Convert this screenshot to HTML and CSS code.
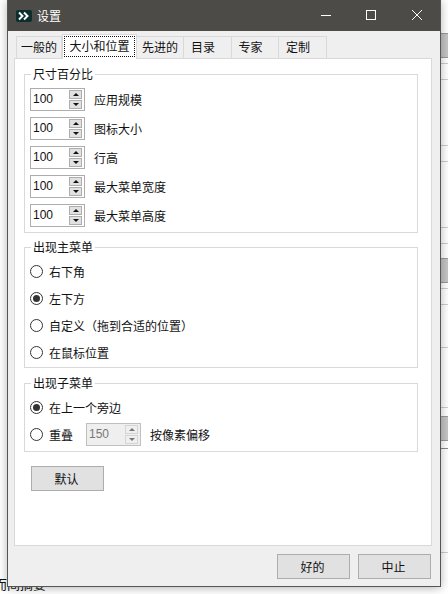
FILE: index.html
```html
<!DOCTYPE html>
<html lang="zh">
<head>
    <meta charset="UTF-8">
    <meta name="viewport" content="width=device-width, initial-scale=1.0">
    <title>设置</title>
    <link rel="stylesheet" href="styles.css">
</head>
<body>
    <div class="desktop">
        <div class="behind-strip"></div>
        <div class="behind-text">而间摘要</div>

        <div class="window">
            <div class="titlebar">
                <div class="app-icon">
                    <svg width="16" height="12" viewBox="0 0 16 12"><path d="M3 2.5 L6.5 6 L3 9.5 M8 2.5 L11.5 6 L8 9.5" fill="none" stroke="#fff" stroke-width="2"/></svg>
                </div>
                <span class="title">设置</span>
                <div class="controls">
                    <svg class="ctl" width="46" height="31" viewBox="0 0 46 31"><path d="M19 15.5 H29" stroke="#fff" fill="none"/></svg>
                    <svg class="ctl" width="46" height="31" viewBox="0 0 46 31"><rect x="18.5" y="10.5" width="9" height="9" stroke="#fff" fill="none"/></svg>
                    <svg class="ctl" width="46" height="31" viewBox="0 0 46 31"><path d="M18 10 L28 20 M28 10 L18 20" stroke="#fff" fill="none"/></svg>
                </div>
            </div>

            <div class="client">
                <div class="tabs">
                    <div class="tab tab-first">一般的</div>
                    <div class="tab tab-active"><span class="focus">大小和位置</span></div>
                    <div class="tab tab-w1">先进的</div>
                    <div class="tab tab-w2">目录</div>
                    <div class="tab tab-w2">专家</div>
                    <div class="tab tab-w2">定制</div>
                </div>

                <div class="panel">
                    <fieldset class="group group-size">
                        <legend>尺寸百分比</legend>
                        <div class="row">
                            <div class="spin"><span class="spin-value">100</span><div class="spin-btns"><div class="spin-btn"><i class="arrow-up"></i></div><div class="spin-btn"><i class="arrow-down"></i></div></div></div>
                            <span class="row-label">应用规模</span>
                        </div>
                        <div class="row">
                            <div class="spin"><span class="spin-value">100</span><div class="spin-btns"><div class="spin-btn"><i class="arrow-up"></i></div><div class="spin-btn"><i class="arrow-down"></i></div></div></div>
                            <span class="row-label">图标大小</span>
                        </div>
                        <div class="row">
                            <div class="spin"><span class="spin-value">100</span><div class="spin-btns"><div class="spin-btn"><i class="arrow-up"></i></div><div class="spin-btn"><i class="arrow-down"></i></div></div></div>
                            <span class="row-label">行高</span>
                        </div>
                        <div class="row">
                            <div class="spin"><span class="spin-value">100</span><div class="spin-btns"><div class="spin-btn"><i class="arrow-up"></i></div><div class="spin-btn"><i class="arrow-down"></i></div></div></div>
                            <span class="row-label">最大菜单宽度</span>
                        </div>
                        <div class="row">
                            <div class="spin"><span class="spin-value">100</span><div class="spin-btns"><div class="spin-btn"><i class="arrow-up"></i></div><div class="spin-btn"><i class="arrow-down"></i></div></div></div>
                            <span class="row-label">最大菜单高度</span>
                        </div>
                    </fieldset>

                    <fieldset class="group group-main">
                        <legend>出现主菜单</legend>
                        <div class="radio-row"><span class="radio"></span>右下角</div>
                        <div class="radio-row"><span class="radio radio-on"></span>左下方</div>
                        <div class="radio-row"><span class="radio"></span>自定义（拖到合适的位置）</div>
                        <div class="radio-row"><span class="radio"></span>在鼠标位置</div>
                    </fieldset>

                    <fieldset class="group group-sub">
                        <legend>出现子菜单</legend>
                        <div class="radio-row"><span class="radio radio-on"></span>在上一个旁边</div>
                        <div class="radio-row">
                            <span class="radio"></span><span class="overlap">重叠</span>
                            <div class="spin spin-off"><span class="spin-value">150</span><div class="spin-btns"><div class="spin-btn"><i class="arrow-up"></i></div><div class="spin-btn"><i class="arrow-down"></i></div></div></div>
                            <span class="row-label">按像素偏移</span>
                        </div>
                    </fieldset>

                    <button class="btn btn-default">默认</button>
                </div>

                <div class="footer">
                    <button class="btn">好的</button>
                    <button class="btn">中止</button>
                </div>
            </div>
        </div>
    </div>
</body>
</html>
```

FILE: styles.css
```css
* {
    box-sizing: border-box;
}

body {
    margin: 0;
    width: 448px;
    height: 594px;
    overflow: hidden;
    background-color: #fff;
    color: #111;
    font-family: "Noto Sans CJK SC", "Liberation Sans", sans-serif;
    font-size: 12px;
}

.desktop {
    position: relative;
    width: 448px;
    height: 594px;
    overflow: hidden;
}

/* table rows of the app behind the dialog, only a sliver shows */
.behind-strip {
    position: absolute;
    right: 0;
    top: 0;
    width: 8px;
    height: 594px;
    background: linear-gradient(to bottom,
        #fff 0 33px, #999 33px 34px, #c4c4c4 34px 57px, #999 57px 58px,
        #fff 58px 63px, #ccc 63px 64px, #fff 64px 79px, #ccc 79px 80px,
        #fff 80px 145px, #ccc 145px 146px, #fff 146px 161px, #ccc 161px 162px,
        #fff 162px 227px, #ccc 227px 228px, #fff 228px 243px, #ccc 243px 244px,
        #fff 244px 258px, #999 258px 259px, #c4c4c4 259px 282px, #999 282px 283px,
        #fff 283px 288px, #ccc 288px 289px, #fff 289px 304px, #ccc 304px 305px,
        #fff 305px 347px, #ccc 347px 348px, #fff 348px 407px, #ccc 407px 408px,
        #fff 408px 416px, #999 416px 417px, #c4c4c4 417px 440px, #999 440px 441px,
        #fff 441px 448px, #888 448px 449px, #fff 449px 552px, #ccc 552px 553px,
        #fff 553px);
}

.behind-text {
    position: absolute;
    left: -6px;
    top: 576px;
    font-size: 13px;
    line-height: 16px;
}

.window {
    position: absolute;
    left: 7px;
    top: 0;
    width: 434px;
    height: 587px;
    display: flex;
    flex-direction: column;
    border: 1px solid #555;
    border-top: none;
    box-shadow: 0 1px 9px rgba(0, 0, 0, 0.3);
}

.titlebar {
    height: 31px;
    display: flex;
    align-items: center;
    background-color: #4d4b47;
    color: #fff;
}

.app-icon {
    width: 16px;
    height: 12px;
    margin-left: 8px;
    background-color: #0d2e2e;
    border-radius: 2px;
    display: flex;
}

.title {
    margin-left: 5px;
    padding-bottom: 1px;
    font-size: 12px;
}

.controls {
    margin-left: auto;
    display: flex;
}

.client {
    flex: 1;
    display: flex;
    flex-direction: column;
    background-color: #efefef;
    padding: 3px 8px 0 6px;
}

.tabs {
    display: flex;
    height: 24px;
    padding-left: 2px;
    align-items: flex-end;
}

.tab {
    height: 22px;
    width: 47px;
    padding-bottom: 2px;
    border: 1px solid #d9d9d9;
    border-left: none;
    border-bottom: none;
    display: flex;
    align-items: center;
    justify-content: center;
    line-height: 20px;
}

.tab-first {
    border-left: 1px solid #d9d9d9;
    width: 46px;
}

.tab-active {
    height: 25px;
    width: 75px;
    margin-bottom: -1px;
    padding-bottom: 2px;
    background-color: #fff;
    border-left: 1px solid #d9d9d9;
    position: relative;
    z-index: 1;
}

.focus {
    outline: 1px dotted #111;
    height: 19px;
    width: 69px;
    line-height: 18px;
    text-align: center;
}

.tab-w2 {
    width: 47.5px;
    justify-content: flex-start;
    padding-left: 7px;
}

.panel {
    height: 488px;
    background-color: #fff;
    border: 1px solid #d9d9d9;
    padding: 7px 13px 0 9px;
}

.group {
    margin: 0;
    padding: 0 0 0 5px;
    border: 1px solid #d9d9d9;
    min-width: 0;
}

.group legend {
    margin-left: 1px;
    padding: 0 2px;
    line-height: 16px;
    height: 16px;
}

.group-size {
    height: 167px;
    padding-top: 6px;
}

.group-main {
    height: 129px;
    margin-top: 6px;
    padding-top: 3px;
}

.group-sub {
    height: 77px;
    margin-top: 7px;
    padding-top: 3px;
}

.row {
    display: flex;
    align-items: center;
    height: 23px;
    margin-bottom: 6px;
}

.row-label {
    margin-left: 9px;
}

.spin {
    width: 55px;
    height: 23px;
    display: flex;
    align-items: center;
    justify-content: space-between;
    background-color: #fff;
    border: 1px solid #adadad;
    padding: 0 2px;
}

.spin-value {
    padding-bottom: 2px;
    font-family: "Liberation Sans", sans-serif;
    font-size: 12px;
}

.spin-btns {
    width: 13px;
    display: flex;
    flex-direction: column;
    gap: 1px;
}

.spin-btn {
    height: 9px;
    background-color: #e1e1e1;
    border: 1px solid #adadad;
    display: flex;
    align-items: center;
    justify-content: center;
}

.arrow-up {
    border-left: 3px solid transparent;
    border-right: 3px solid transparent;
    border-bottom: 3px solid #111;
}

.arrow-down {
    border-left: 3px solid transparent;
    border-right: 3px solid transparent;
    border-top: 3px solid #111;
}

.radio-row {
    display: flex;
    align-items: center;
    height: 27px;
}

.radio {
    width: 13px;
    height: 13px;
    border: 1px solid #333;
    border-radius: 50%;
    background-color: #fff;
    margin-right: 6px;
    display: flex;
    align-items: center;
    justify-content: center;
}

.radio-on::after {
    content: "";
    width: 7px;
    height: 7px;
    border-radius: 50%;
    background-color: #333;
}

.overlap {
    width: 37px;
}

.spin-off {
    background-color: #efefef;
    border-color: #bfbfbf;
    color: #777;
}

.spin-off .spin-btn {
    background-color: #efefef;
    border-color: #d4d4d4;
}

.spin-off .arrow-up {
    border-bottom-color: #777;
}

.spin-off .arrow-down {
    border-top-color: #777;
}

.btn {
    width: 73px;
    height: 25px;
    padding: 0 2px 0 0;
    background-color: #e1e1e1;
    border: 1px solid #adadad;
    color: #111;
    font-family: inherit;
    font-size: 12px;
}

.btn-default {
    display: block;
    margin: 14px 0 0 7px;
}

.footer {
    display: flex;
    justify-content: flex-end;
    gap: 8px;
    padding: 8px 1px 0 0;
}
```
